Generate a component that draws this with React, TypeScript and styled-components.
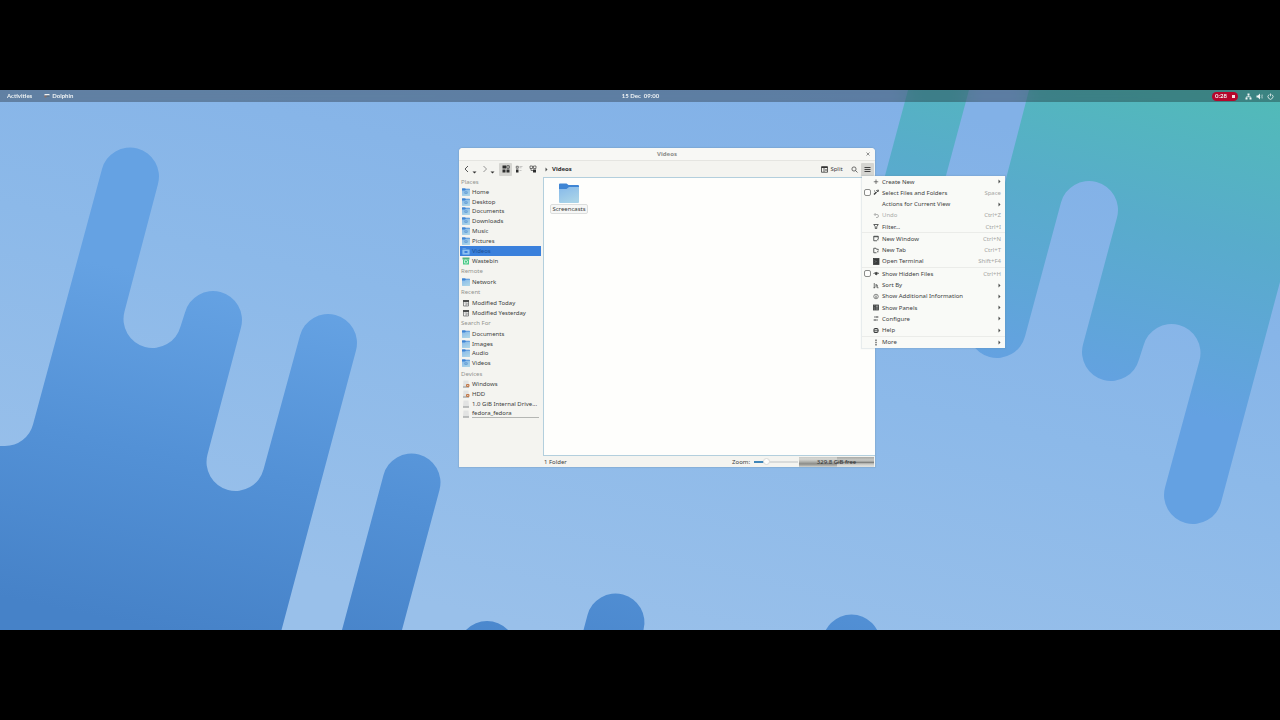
import React from "react";
import styled, { createGlobalStyle, css } from "styled-components";

const GlobalStyle = createGlobalStyle`
  *, *::before, *::after { box-sizing: border-box; }
  body { margin: 0; background: #000; }
  button, input { font: inherit; color: inherit; margin: 0; }
`;

const uiFont = `"Noto Sans", "DejaVu Sans", sans-serif`;

const Page = styled.div`
  min-height: 100vh;
  display: flex;
  flex-direction: column;
  justify-content: center;
  background: #000;
`;

const Desktop = styled.main`
  position: relative;
  width: 100%;
  aspect-ratio: 64 / 27;
  overflow: hidden;
  font-family: ${uiFont};
  font-size: 6px;
  line-height: 8px;
  color: #3b3d3d;
`;

const WallpaperSvg = styled.svg`
  position: absolute;
  inset: 0;
  width: 100%;
  height: 100%;
`;

const TopBar = styled.header`
  position: relative;
  display: grid;
  grid-template-columns: 1fr auto 1fr;
  align-items: center;
  height: 12px;
  padding: 0 6px 0 7px;
  background: rgba(10, 10, 10, 0.31);
  backdrop-filter: blur(10px);
  color: #eef2f4;
  font-family: Lato, "Noto Sans", sans-serif;
  font-weight: 700;
`;

const BarGroup = styled.div<{ $gap: number; $end?: boolean }>`
  display: flex;
  align-items: center;
  gap: ${(p) => p.$gap}px;
  justify-content: ${(p) => (p.$end ? "flex-end" : "flex-start")};
`;

const BarButton = styled.button`
  display: flex;
  align-items: center;
  gap: 2px;
  padding: 0;
  border: 0;
  background: none;
`;

const RecordPill = styled.button`
  display: flex;
  align-items: center;
  justify-content: center;
  gap: 5px;
  width: 26px;
  height: 9px;
  padding: 0;
  margin-right: 3px;
  border: 0;
  border-radius: 5px;
  background: #b5062b;
`;

const StopSquare = styled.span`
  width: 3px;
  height: 3px;
  background: #f7dfe4;
`;

const Window = styled.section`
  position: absolute;
  left: 459px;
  top: 58px;
  width: 416px;
  height: 319px;
  display: flex;
  flex-direction: column;
  border-radius: 4px 4px 0 0;
  background: #f4f4f0;
  box-shadow: 0 0 1px 1px rgba(90, 120, 140, 0.18);
`;

const TitleBar = styled.header`
  display: grid;
  grid-template-columns: 15px 1fr 15px;
  align-items: center;
  justify-items: center;
  flex: none;
  height: 13px;
  border-bottom: 1px solid #e5e5e1;
  border-radius: 4px 4px 0 0;
  background: #f8f8f5;
  color: #8b8c8a;
`;

const Title = styled.h1`
  margin: 0;
  grid-column: 2;
  font-size: 6px;
  font-weight: 700;
`;

const PlainButton = styled.button`
  display: flex;
  align-items: center;
  padding: 0;
  border: 0;
  background: none;
`;

const ToolBar = styled.div`
  display: flex;
  align-items: center;
  justify-content: space-between;
  flex: none;
  height: 16px;
  padding: 0 1px 0 2px;
`;

const ToolGroup = styled.div<{ $gap?: number }>`
  display: flex;
  align-items: center;
  gap: ${(p) => p.$gap ?? 0}px;
`;

const ToolButton = styled.button<{ $width: number; $active?: boolean }>`
  display: flex;
  align-items: center;
  justify-content: center;
  gap: 2px;
  width: ${(p) => p.$width}px;
  height: 13px;
  padding: 0;
  border: 0;
  border-radius: 1px;
  background: ${(p) => (p.$active ? "#d5d5d1" : "none")};
`;

const Crumb = styled.button`
  display: flex;
  align-items: center;
  gap: 4px;
  padding: 0;
  margin-left: 5px;
  border: 0;
  background: none;
  color: #2b2d2e;
  font-weight: 700;
`;

const Body = styled.div`
  display: flex;
  flex: 1;
  min-height: 0;
`;

const Sidebar = styled.nav`
  display: flex;
  flex-direction: column;
  flex: none;
  width: 84px;
  height: 242px;
  padding-left: 1px;
`;

const PlacesHeading = styled.h2<{ $first?: boolean }>`
  display: flex;
  align-items: center;
  flex: ${(p) => (p.$first ? 7 : 8)} 1 0;
  margin: 0;
  padding-left: 1px;
  color: #92938f;
  font-size: 6px;
  font-weight: 400;
`;

const Place = styled.button<{ $selected?: boolean; $capacity?: boolean }>`
  display: flex;
  align-items: center;
  gap: 2px;
  flex: 7 1 0;
  width: 81px;
  padding: 0 2px;
  border: 0;
  background: ${(p) => (p.$selected ? "#3a80dc" : "none")};
  color: ${(p) => (p.$selected ? "#1d4f94" : "inherit")};
  text-align: left;
  white-space: nowrap;
  ${(p) =>
    p.$capacity &&
    css`
      span {
        flex: 1;
        border-bottom: 1px solid #b4b6b3;
      }
    `}
`;

const Main = styled.div`
  display: flex;
  flex-direction: column;
  flex: 1;
`;

const FileView = styled.div`
  flex: 1;
  padding: 5px 7px;
  border: 1px solid #b3cfdd;
  border-right: 0;
  background: #fefefc;
`;

const FileItem = styled.button`
  display: flex;
  flex-direction: column;
  align-items: center;
  gap: 2px;
  width: 36px;
  padding: 0;
  border: 0;
  background: none;
`;

const FileName = styled.span`
  padding: 0 1px;
  outline: 1px solid #dcdedd;
  border-radius: 1px;
  background: #f6f7f6;
`;

const StatusBar = styled.footer`
  display: flex;
  align-items: center;
  flex: none;
  height: 11px;
  padding-left: 1px;
`;

const ZoomLabel = styled.label`
  display: flex;
  align-items: center;
  gap: 4px;
  margin-left: auto;
`;

const ZoomSlider = styled.input`
  appearance: none;
  width: 44px;
  height: 8px;
  background: linear-gradient(90deg, #3f86b8 10px, #d9dbda 10px) center / 100% 2px no-repeat;
  &::-webkit-slider-thumb {
    appearance: none;
    width: 7px;
    height: 7px;
    border: 1px solid #d9dbd9;
    border-radius: 50%;
    background: #fdfdfc;
  }
`;

const FreeSpace = styled.div`
  display: flex;
  align-items: center;
  justify-content: center;
  width: 75px;
  height: 10px;
  margin: 0 1px;
  color: #2f3131;
  background:
    linear-gradient(#a9aaa6 0%, #c6c7c3 30%, #b4b5b1 42%, #7d7e7b 54%, #b9bab6 66%, #d4d5d1 80%, #e2e3df 100%) right / 37px 100% no-repeat,
    linear-gradient(#c9cac6 0%, #d6d7d3 20%, #bdbeba 40%, #a3a4a0 55%, #8b8c89 68%, #a6a7a3 82%, #d5d6d2 100%);
`;

const Menu = styled.div`
  position: absolute;
  left: 403px;
  top: 28px;
  display: flex;
  flex-direction: column;
  width: 143px;
  height: 172px;
  background: #f9faf7;
  box-shadow: 0 0 1px 1px rgba(90, 130, 150, 0.14);
`;

const menuRow = css`
  display: grid;
  grid-template-columns: 7px 7px 1fr auto;
  align-items: center;
  column-gap: 2px;
  flex: 1 1 0;
  min-height: 0;
  padding: 0 4px 0 2px;
`;

const MenuButton = styled.button<{ $dim?: boolean }>`
  ${menuRow}
  border: 0;
  background: none;
  text-align: left;
  color: ${(p) => (p.$dim ? "#a9aaa8" : "inherit")};
`;

const MenuToggle = styled.label`
  ${menuRow}
`;

const MenuText = styled.span`
  grid-column: 3;
`;

const IconCell = styled.span`
  grid-column: 2;
  display: flex;
`;

const Shortcut = styled.span`
  color: #a5a6a4;
`;

const CheckBox = styled.input`
  appearance: none;
  width: 7px;
  height: 7px;
  border: 1px solid #8b8d8b;
  border-radius: 2px;
  background: #fdfdfc;
`;

const Separator = styled.hr`
  flex: none;
  width: 100%;
  height: 1px;
  margin: 0;
  border: 0;
  background: #ebece9;
`;

function Wallpaper() {
  return (
    <WallpaperSvg viewBox="0 90 1280 540" preserveAspectRatio="none" aria-hidden="true">
      <defs>
        <linearGradient id="sky" gradientUnits="userSpaceOnUse" x1="720" y1="60" x2="590" y2="640">
          <stop offset="0" stopColor="#82b1e7" />
          <stop offset="0.5" stopColor="#8cb9e9" />
          <stop offset="1" stopColor="#99c0ea" />
        </linearGradient>
        <linearGradient id="deep" gradientUnits="userSpaceOnUse" x1="280" y1="300" x2="210" y2="640">
          <stop offset="0" stopColor="#65a2e3" />
          <stop offset="0.5" stopColor="#5391d6" />
          <stop offset="1" stopColor="#4682c8" />
        </linearGradient>
        <linearGradient id="teal" gradientUnits="userSpaceOnUse" x1="1250" y1="90" x2="1170" y2="410">
          <stop offset="0" stopColor="#51bbb8" />
          <stop offset="0.45" stopColor="#58accb" />
          <stop offset="1" stopColor="#64a1e2" />
        </linearGradient>
      </defs>
      <rect x="0" y="90" width="1280" height="540" fill="url(#sky)" />
      <path
        fill="url(#deep)"
        d="M0 446 H5 A29 29 0 0 0 33 424.500 L102 169 A28 28 0 0 1 158 184 L124.500 311.500 A28 28 0 0 0 180.500 326.500 L185 312.500 A28 28 0 0 1 241 327.500 L207.500 454.500 A28 28 0 0 0 263.500 469.500 L300 335.500 A28 28 0 0 1 356 350.500 L281.500 630 H0 Z"
      />
      <path fill="url(#deep)" d="M342 630 L383.500 475 A28 28 0 0 1 439.500 490 L402 630 Z" />
      <circle cx="487" cy="650" r="29" fill="url(#deep)" />
      <path fill="url(#deep)" d="M583.500 630 L587.500 615 A28 28 0 0 1 643.500 630 Z" />
      <circle cx="851.500" cy="643.500" r="29" fill="url(#deep)" />
      <path fill="url(#teal)" d="M908 90 H969 L926 250 H865 Z" />
      <path
        fill="url(#teal)"
        d="M1029 90 H1280 V282 L1221 502.500 A28 28 0 0 1 1165 487.500 L1199.500 360.500 A28 28 0 0 0 1143.500 345.500 L1139 359.500 A28 28 0 0 1 1083 344.500 L1117 217.500 A28 28 0 0 0 1061 202.500 L1025 336.500 A28 28 0 0 1 969 321.500 Z"
      />
    </WallpaperSvg>
  );
}

type Glyph =
  | "plus" | "wand" | "none" | "undo" | "filter" | "window" | "tab" | "terminal" | "eye"
  | "sort" | "info" | "panels" | "configure" | "help" | "more";

function MenuIcon({ name }: { name: Glyph }) {
  const ink = name === "undo" ? "#a0a19f" : "#3a3c3c";
  const shapes: Record<Glyph, React.ReactNode> = {
    none: null,
    plus: <path d="M6 3v9M1.500 7.500h9" strokeWidth="1.300" />,
    wand: <><path d="M2 11l5-5" strokeWidth="3" /><path d="M7 3l4-1-1 4zM2 4h2" /></>,
    undo: <path d="M5 2L2.500 5 5 8M3 5h5a3 3 0 0 1 0 6H6" />,
    filter: <path d="M1.500 3h9L7.500 7.500V11h-3V7.500z" />,
    window: <><path d="M8 11.500H1.500v-9h9V8" /><path d="M1.500 3.500h9M8 9.500h3" /></>,
    tab: <><path d="M7 11.500H1.500v-9H6l1 2h3.500V7" /><path d="M8 9.500h3" /></>,
    terminal: <><rect x="1" y="1" width="11" height="12" fill={ink} /><path d="M4 5l2 2-2 2" stroke="#8d9290" /></>,
    eye: <><path d="M1 7Q6.500 2.500 12 7" /><circle cx="6.500" cy="7.500" r="2" fill={ink} /></>,
    sort: <path d="M2.500 2v10M1 11.500h3M6 4v7M6 6h2.500v5.500h2.500" strokeWidth="1.400" />,
    info: <><circle cx="6" cy="7" r="4.500" strokeWidth="1.200" /><path d="M6 6v4M6 4v1" /></>,
    panels: <><rect x="1" y="2" width="10" height="10" fill="#8d8f8e" /><path d="M4.500 2v10M1 5h4M1 8h10" /></>,
    configure: <path d="M2 4h9M1 10h9M8 2.500v3M4 8.500v3" strokeWidth="1.400" />,
    help: <><rect x="2" y="3" width="8" height="8" rx="2.500" strokeWidth="2.200" /><path d="M6 2v10M2 7h9" strokeWidth="1" /></>,
    more: <path d="M6 1v3M6 5.500v3M6 10v3" strokeWidth="2.200" />,
  };
  return (
    <svg width="7" height="7" viewBox="0 0 14 14" fill="none" stroke={ink} strokeWidth="1.600" aria-hidden="true">
      {shapes[name]}
    </svg>
  );
}

const SubmenuArrow = () => (
  <svg width="3" height="5" viewBox="0 0 3 5" aria-hidden="true">
    <path d="M.5 .5L2.500 2.500 .5 4.500z" fill="#4b4d4c" />
  </svg>
);

const DownArrow = () => (
  <svg width="5" height="11" viewBox="0 0 5 11" aria-hidden="true">
    <path d="M.5 7.500h4L2.500 9.500z" fill="#333" />
  </svg>
);

function FolderIcon({ size, mark }: { size: number; mark?: boolean }) {
  return (
    <svg width={size} height={size} viewBox="0 0 20 20" aria-hidden="true">
      <defs>
        <linearGradient id="folderFront" x1="0" y1="0" x2="0.5" y2="1">
          <stop offset="0" stopColor="#86b9ea" />
          <stop offset="1" stopColor="#a9d3e8" />
        </linearGradient>
      </defs>
      <path d="M0 1.500 Q0 0.500 1 0.500 H7.500 L9.500 2 H19 Q20 2 20 3 V8 H0 Z" fill="#3f85d4" />
      <path d="M0 6 H7.500 L10 4 H20 V19 Q20 20 19 20 H1 Q0 20 0 19 Z" fill="url(#folderFront)" />
      {mark && <path d="M7 9.500h6v4H7z" fill="none" stroke="#5d99d3" strokeWidth="2" />}
    </svg>
  );
}

type PlaceKind = "folder" | "plain" | "selected" | "bin" | "calendar" | "lockedDrive" | "drive";

function PlaceIcon({ kind }: { kind: PlaceKind }) {
  if (kind === "folder" || kind === "plain") return <FolderIcon size={8} mark={kind === "folder"} />;
  if (kind === "selected")
    return (
      <svg width="8" height="8" viewBox="0 0 16 16" aria-hidden="true">
        <path d="M1 2h6l2 2h6v11H1z" fill="#5d9ee6" />
        <path d="M1 6h14v9H1z" fill="#8dc0f0" />
        <path d="M5 8h6v4H5z" fill="#3a80dc" />
      </svg>
    );
  if (kind === "bin")
    return (
      <svg width="8" height="8" viewBox="0 0 16 16" aria-hidden="true">
        <path d="M1 1h14v4H1z" fill="#53b37c" />
        <path d="M2 5h12v10H2z" fill="#48c987" />
        <path d="M5 7l3-1 3 2v4H5z" fill="none" stroke="#e3fbee" strokeWidth="1.500" />
      </svg>
    );
  if (kind === "calendar")
    return (
      <svg width="8" height="8" viewBox="0 0 16 16" aria-hidden="true">
        <path d="M3 3h10v11H3z" fill="#f4f4f2" stroke="#6a6c6c" strokeWidth="1.500" />
        <path d="M2 2h12v4H2z" fill="#4c4e4e" />
        <path d="M8 14V10h5M5 8h6" fill="none" stroke="#6a6c6c" strokeWidth="1.200" />
      </svg>
    );
  return (
    <svg width="8" height="8" viewBox="0 0 16 16" aria-hidden="true">
      <path d="M3 1h10l1 11v3H2v-3z" fill="#e2e3e2" />
      <path d="M2 13h12v2H2z" fill="#8f9292" />
      {kind === "lockedDrive" && (
        <>
          <rect x="8" y="8" width="7" height="6" rx="2" fill="#c27a4a" />
          <path d="M11.500 10v2" stroke="#fff" strokeWidth="1.500" />
        </>
      )}
    </svg>
  );
}

const places: { heading: string; items: [string, PlaceKind][] }[] = [
  {
    heading: "Places",
    items: [
      ["Home", "folder"], ["Desktop", "folder"], ["Documents", "folder"], ["Downloads", "folder"],
      ["Music", "folder"], ["Pictures", "folder"], ["Videos", "selected"], ["Wastebin", "bin"],
    ],
  },
  { heading: "Remote", items: [["Network", "plain"]] },
  { heading: "Recent", items: [["Modified Today", "calendar"], ["Modified Yesterday", "calendar"]] },
  {
    heading: "Search For",
    items: [["Documents", "plain"], ["Images", "plain"], ["Audio", "plain"], ["Videos", "folder"]],
  },
  {
    heading: "Devices",
    items: [
      ["Windows", "lockedDrive"], ["HDD", "lockedDrive"],
      ["1.0 GiB Internal Drive...", "drive"], ["fedora_fedora", "drive"],
    ],
  },
];

type Entry = { text: string; icon: Glyph; keys?: string; toggle?: boolean; dim?: boolean };

const menuGroups: Entry[][] = [
  [
    { text: "Create New", icon: "plus" },
    { text: "Select Files and Folders", icon: "wand", keys: "Space", toggle: true },
    { text: "Actions for Current View", icon: "none" },
    { text: "Undo", icon: "undo", keys: "Ctrl+Z", dim: true },
    { text: "Filter...", icon: "filter", keys: "Ctrl+I" },
  ],
  [
    { text: "New Window", icon: "window", keys: "Ctrl+N" },
    { text: "New Tab", icon: "tab", keys: "Ctrl+T" },
    { text: "Open Terminal", icon: "terminal", keys: "Shift+F4" },
  ],
  [
    { text: "Show Hidden Files", icon: "eye", keys: "Ctrl+H", toggle: true },
    { text: "Sort By", icon: "sort" },
    { text: "Show Additional Information", icon: "info" },
    { text: "Show Panels", icon: "panels" },
    { text: "Configure", icon: "configure" },
    { text: "Help", icon: "help" },
  ],
  [{ text: "More", icon: "more" }],
];

function MenuEntry({ entry }: { entry: Entry }) {
  const content = (
    <>
      <IconCell><MenuIcon name={entry.icon} /></IconCell>
      <MenuText>{entry.text}</MenuText>
      {entry.keys ? <Shortcut>{entry.keys}</Shortcut> : <SubmenuArrow />}
    </>
  );
  if (entry.toggle)
    return (
      <MenuToggle>
        <CheckBox type="checkbox" />
        {content}
      </MenuToggle>
    );
  return <MenuButton $dim={entry.dim}>{content}</MenuButton>;
}

export default function App() {
  return (
    <Page>
      <GlobalStyle />
      <Desktop>
        <Wallpaper />
        <TopBar>
          <BarGroup $gap={12}>
            <BarButton>Activities</BarButton>
            <BarButton>
              <svg width="6" height="6" viewBox="0 0 12 12" aria-hidden="true">
                <path d="M1 2h10v3H1z" fill="#f1f3f4" />
                <path d="M1 5h4v4H1z" fill="#8d6f63" />
                <path d="M5 5h6v2H5z" fill="#54616c" />
              </svg>
              Dolphin
            </BarButton>
          </BarGroup>
          <BarButton>15 Dec&nbsp; 09:00</BarButton>
          <BarGroup $gap={4} $end>
            <RecordPill>
              0:28
              <StopSquare />
            </RecordPill>
            <svg width="7" height="7" viewBox="0 0 14 14" aria-hidden="true">
              <path d="M5 1h4v4H5zM1 9h4v4H1zM9 9h4v4H9z" fill="#eef4f4" />
              <path d="M7 5v2.500M3 9V7.500h8V9" fill="none" stroke="#eef4f4" strokeWidth="1.500" />
            </svg>
            <svg width="7" height="7" viewBox="0 0 14 14" aria-hidden="true">
              <path d="M1 5h3l4-4v12L4 9H1z" fill="#eef4f4" />
              <path d="M10 4q2 3 0 6M12 2.500q3 4.500 0 9" fill="none" stroke="#b9d2d2" strokeWidth="1.200" />
            </svg>
            <svg width="7" height="7" viewBox="0 0 14 14" aria-hidden="true">
              <path d="M4.500 3a5 5 0 1 0 5 0M7 1v5.500" fill="none" stroke="#eef4f4" strokeWidth="1.600" />
            </svg>
          </BarGroup>
        </TopBar>

        <Window>
          <TitleBar>
            <Title>Videos</Title>
            <PlainButton aria-label="Close">
              <svg width="4" height="4" viewBox="0 0 4 4" aria-hidden="true">
                <path d="M.5 .5l3 3M3.500 .5l-3 3" stroke="#666" strokeWidth=".7" />
              </svg>
            </PlainButton>
          </TitleBar>

          <ToolBar>
            <ToolGroup $gap={2}>
              <ToolGroup>
                <ToolButton $width={18} aria-label="Back">
                  <svg width="6" height="8" viewBox="0 0 6 8" aria-hidden="true">
                    <path d="M4 1L1 4l3 3" fill="none" stroke="#444" strokeWidth=".9" />
                  </svg>
                  <DownArrow />
                </ToolButton>
                <ToolButton $width={18} aria-label="Forward">
                  <svg width="6" height="8" viewBox="0 0 6 8" aria-hidden="true">
                    <path d="M1.500 1l3 3-3 3" fill="none" stroke="#888" strokeWidth=".9" />
                  </svg>
                  <DownArrow />
                </ToolButton>
              </ToolGroup>
              <ToolGroup>
                <ToolButton $width={13} $active aria-label="Icons">
                  <svg width="8" height="8" viewBox="0 0 16 16" aria-hidden="true">
                    <path d="M1 1h7v6H1zM9 9h6v6H9zM1 9h6v6H1z" fill="#2c2d2d" />
                    <path d="M9.500 1.500h5v5h-5z" fill="none" stroke="#2c2d2d" strokeWidth="1.500" />
                  </svg>
                </ToolButton>
                <ToolButton $width={14} aria-label="Compact">
                  <svg width="8" height="8" viewBox="0 0 16 16" aria-hidden="true">
                    <path d="M2.500 2.500h4v4h-4z" fill="none" stroke="#444" strokeWidth="1.400" />
                    <path d="M2 9h5v6H2z" fill="#2c2d2d" />
                    <path d="M9 3h6M9 5.500h4M9 11h4" stroke="#999" />
                  </svg>
                </ToolButton>
                <ToolButton $width={14} aria-label="Details">
                  <svg width="8" height="8" viewBox="0 0 16 16" aria-hidden="true">
                    <path d="M2 2h5v5H2zM9 2h5v5H9z" fill="none" stroke="#444" strokeWidth="1.400" />
                    <path d="M8 9h6v6H8z" fill="#2c2d2d" />
                    <path d="M4 7v4h4" fill="none" stroke="#444" strokeWidth="1.400" />
                  </svg>
                </ToolButton>
                <Crumb>
                  <SubmenuArrow />
                  Videos
                </Crumb>
              </ToolGroup>
            </ToolGroup>
            <ToolGroup>
              <ToolButton $width={30}>
                <svg width="7" height="7" viewBox="0 0 14 14" aria-hidden="true">
                  <path d="M1 1.500h12v11H1zM6 4v8" fill="none" stroke="#333" strokeWidth="1.500" />
                  <path d="M1 1h12v3H1z" fill="#333" />
                  <path d="M8 8h4M10 6v4" stroke="#333" />
                </svg>
                Split
              </ToolButton>
              <ToolButton $width={14} aria-label="Search">
                <svg width="7" height="7" viewBox="0 0 14 14" aria-hidden="true">
                  <circle cx="6" cy="6" r="4.200" fill="none" stroke="#444" strokeWidth="1.500" />
                  <path d="M9 9l4 4" stroke="#444" strokeWidth="1.500" />
                </svg>
              </ToolButton>
              <ToolButton $width={13} $active aria-label="Open menu">
                <svg width="7" height="7" viewBox="0 0 14 14" aria-hidden="true">
                  <path d="M1 3h12M1 7h12M1 11h12" stroke="#444" strokeWidth="2.200" />
                </svg>
              </ToolButton>
            </ToolGroup>
          </ToolBar>

          <Body>
            <Sidebar aria-label="Places">
              {places.map((group, index) => (
                <React.Fragment key={group.heading}>
                  <PlacesHeading $first={index === 0}>{group.heading}</PlacesHeading>
                  {group.items.map(([name, kind]) => (
                    <Place key={name} $selected={kind === "selected"} $capacity={name === "fedora_fedora"}>
                      <PlaceIcon kind={kind} />
                      <span>{name}</span>
                    </Place>
                  ))}
                </React.Fragment>
              ))}
            </Sidebar>
            <Main>
              <FileView>
                <FileItem>
                  <FolderIcon size={20} />
                  <FileName>Screencasts</FileName>
                </FileItem>
              </FileView>
              <StatusBar>
                <span>1 Folder</span>
                <ZoomLabel>
                  Zoom:
                  <ZoomSlider type="range" min="0" max="16" defaultValue="4" />
                </ZoomLabel>
                <FreeSpace>329.8 GiB free</FreeSpace>
              </StatusBar>
            </Main>
          </Body>

          <Menu>
            {menuGroups.map((group, index) => (
              <React.Fragment key={group[0].text}>
                {index > 0 && <Separator />}
                {group.map((entry) => (
                  <MenuEntry key={entry.text} entry={entry} />
                ))}
              </React.Fragment>
            ))}
          </Menu>
        </Window>
      </Desktop>
    </Page>
  );
}
